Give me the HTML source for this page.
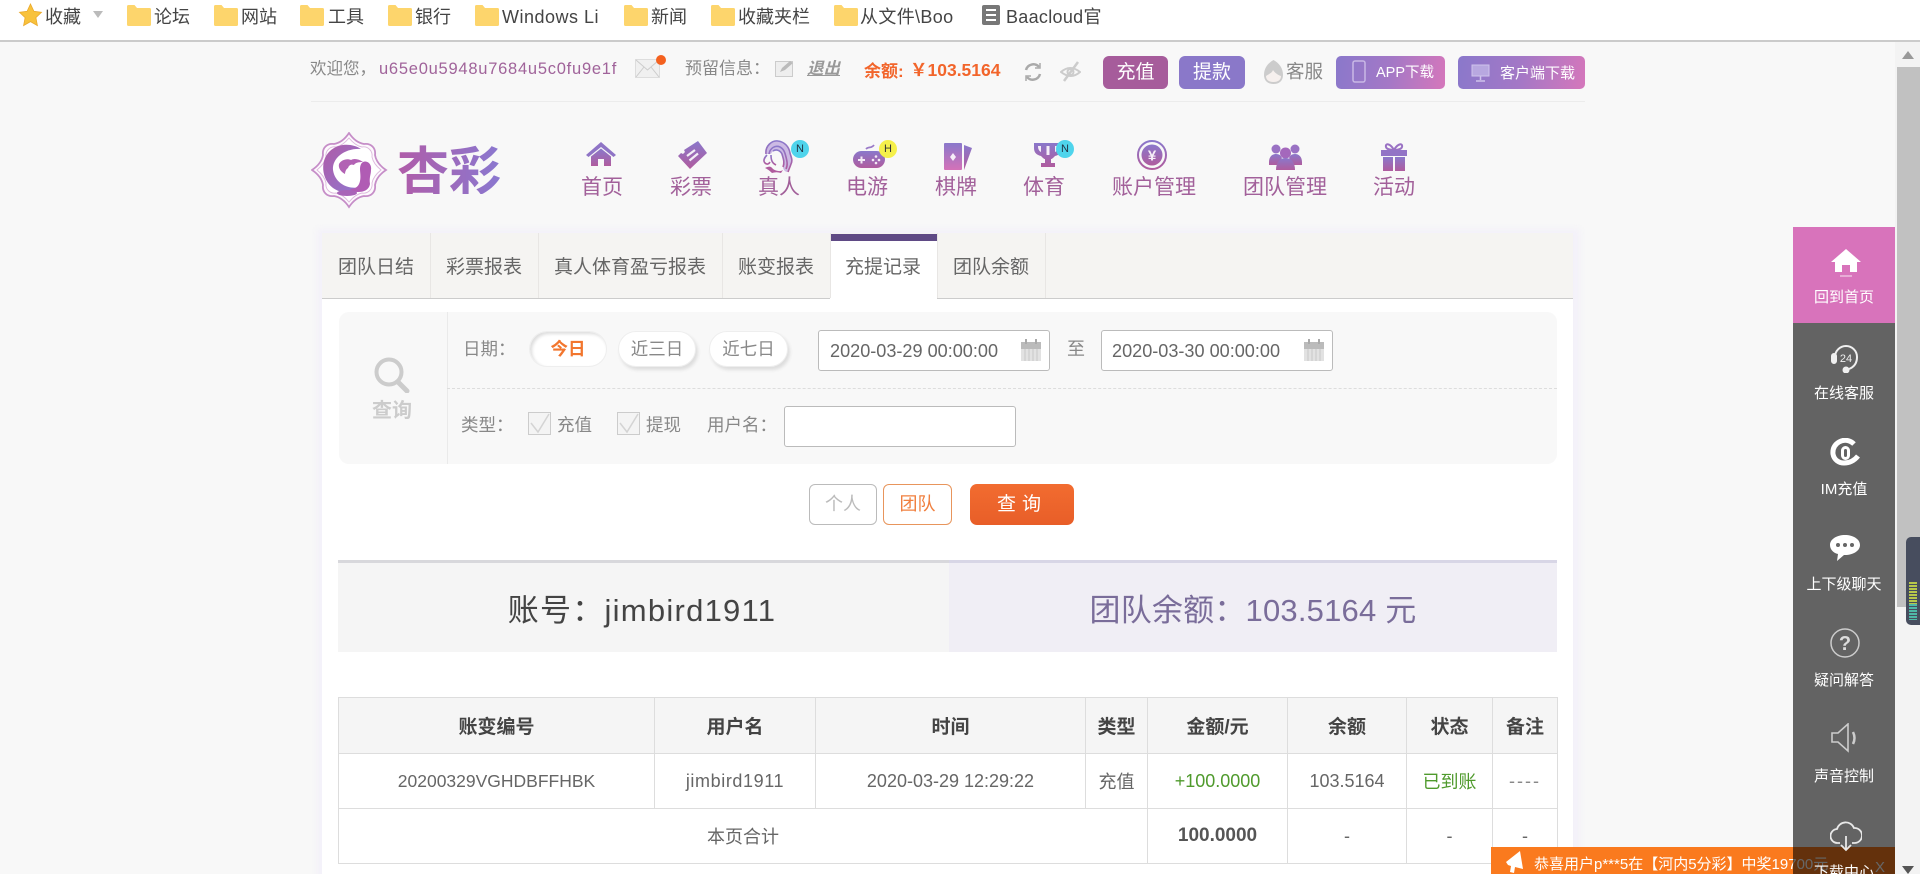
<!DOCTYPE html>
<html lang="zh-CN"><head><meta charset="utf-8"><title>充提记录</title>
<style>
*{box-sizing:border-box}
html,body{margin:0;padding:0;width:1920px;height:874px;overflow:hidden;background:#f8f8f8}
body{position:relative;font-family:"Liberation Sans","Noto Sans CJK SC",sans-serif;color:#666}
.a,.t,svg.i{position:absolute}
.t{white-space:nowrap;line-height:1}
.c{text-align:center;transform:translateX(-50%)}
.bm{font-size:18px;color:#444;top:8px}
.nav{font-size:21px;color:#a2609a;top:177px}
.tab{font-size:19px;color:#666;top:258px}
.sep{position:absolute;top:233px;width:1px;height:65px;background:#e8e6e4}
.lb{font-size:17.5px;color:#888}
.pill{position:absolute;top:331px;height:36px;border-radius:18px;background:#fff;box-shadow:2px 3px 3px #ddd;border:1px solid #eee;text-align:center;line-height:35px;font-size:17.5px;color:#888}
.inp{position:absolute;background:#fff;border:1px solid #bbb;border-radius:3px}
.side{position:absolute;left:1793px;width:102px;text-align:center;font-size:15px;color:#fff;line-height:1;white-space:nowrap}
table{position:absolute;left:338px;top:697px;width:1219px;border-collapse:collapse;table-layout:fixed;background:#fff}
td,th{border:1px solid #ddd;text-align:center;padding:0;font-size:18px;color:#666;font-weight:400;white-space:nowrap}
th{background:#f5f5f5;color:#444;font-weight:700;height:56px;font-size:19px}
tbody td{height:55px}
</style></head><body>
<svg width="0" height="0" style="position:absolute"><defs>
<linearGradient id="g" x1="0" y1="0" x2="0" y2="1"><stop offset="0" stop-color="#8a78cb"/><stop offset="1" stop-color="#b05c9e"/></linearGradient>
<linearGradient id="g2" x1="0" y1="0" x2="0" y2="1"><stop offset="0" stop-color="#8a78cb"/><stop offset="1" stop-color="#d472b8"/></linearGradient>
<linearGradient id="g3" x1="0" y1="0" x2="1" y2="1"><stop offset="0" stop-color="#b05ca8"/><stop offset="1" stop-color="#8f76cf"/></linearGradient>
</defs></svg>

<!-- bookmarks -->
<div class="a" style="left:0;top:0;width:1920px;height:40px;background:#fff"></div>
<div class="a" style="left:0;top:40px;width:1920px;height:2px;background:#cbcbcb"></div>
<svg class="i" style="left:18px;top:3px" width="25" height="24" viewBox="0 0 24 24"><path d="M12 1l3.400 7.300 7.600 1-5.600 5.300 1.500 8L12 18.600 5.100 22.600l1.500-8L1 9.300l7.600-1z" fill="#f8c23c" stroke="#eaa92c" stroke-width=".8"/></svg>
<span class="t bm" style="left:45px">收藏</span>
<svg class="i" style="left:93px;top:11px" width="10" height="7"><path d="M0 0h10L5 7z" fill="#bbb"/></svg>
<svg class="i" style="left:127px;top:5px" width="24" height="21" viewBox="0 0 24 21"><path d="M0 1.500q0-1.500 1.500-1.500h6l2.500 3h12.500q1.500 0 1.500 1.500v15q0 1.500-1.500 1.500h-21q-1.500 0-1.500-1.500z" fill="#fdd56c"/></svg><span class="t bm" style="left:154px">论坛</span>
<svg class="i" style="left:214px;top:5px" width="24" height="21" viewBox="0 0 24 21"><path d="M0 1.500q0-1.500 1.500-1.500h6l2.500 3h12.500q1.500 0 1.500 1.500v15q0 1.500-1.500 1.500h-21q-1.500 0-1.500-1.500z" fill="#fdd56c"/></svg><span class="t bm" style="left:241px">网站</span>
<svg class="i" style="left:300px;top:5px" width="24" height="21" viewBox="0 0 24 21"><path d="M0 1.500q0-1.500 1.500-1.500h6l2.500 3h12.500q1.500 0 1.500 1.500v15q0 1.500-1.500 1.500h-21q-1.500 0-1.500-1.500z" fill="#fdd56c"/></svg><span class="t bm" style="left:328px">工具</span>
<svg class="i" style="left:388px;top:5px" width="24" height="21" viewBox="0 0 24 21"><path d="M0 1.500q0-1.500 1.500-1.500h6l2.500 3h12.500q1.500 0 1.500 1.500v15q0 1.500-1.500 1.500h-21q-1.500 0-1.500-1.500z" fill="#fdd56c"/></svg><span class="t bm" style="left:415px">银行</span>
<svg class="i" style="left:475px;top:5px" width="24" height="21" viewBox="0 0 24 21"><path d="M0 1.500q0-1.500 1.500-1.500h6l2.500 3h12.500q1.500 0 1.500 1.500v15q0 1.500-1.500 1.500h-21q-1.500 0-1.500-1.500z" fill="#fdd56c"/></svg><span class="t bm" style="left:502px;letter-spacing:.5px">Windows Li</span>
<svg class="i" style="left:624px;top:5px" width="24" height="21" viewBox="0 0 24 21"><path d="M0 1.500q0-1.500 1.500-1.500h6l2.500 3h12.500q1.500 0 1.500 1.500v15q0 1.500-1.500 1.500h-21q-1.500 0-1.500-1.500z" fill="#fdd56c"/></svg><span class="t bm" style="left:651px">新闻</span>
<svg class="i" style="left:711px;top:5px" width="24" height="21" viewBox="0 0 24 21"><path d="M0 1.500q0-1.500 1.500-1.500h6l2.500 3h12.500q1.500 0 1.500 1.500v15q0 1.500-1.500 1.500h-21q-1.500 0-1.500-1.500z" fill="#fdd56c"/></svg><span class="t bm" style="left:738px">收藏夹栏</span>
<svg class="i" style="left:834px;top:5px" width="24" height="21" viewBox="0 0 24 21"><path d="M0 1.500q0-1.500 1.500-1.500h6l2.500 3h12.500q1.500 0 1.500 1.500v15q0 1.500-1.500 1.500h-21q-1.500 0-1.500-1.500z" fill="#fdd56c"/></svg><span class="t bm" style="left:860px;letter-spacing:.35px">从文件\Boo</span>
<svg class="i" style="left:982px;top:5px" width="18" height="20"><rect width="18" height="20" rx="2" fill="#777"/><path d="M4 5h10M4 10h10M4 15h10" stroke="#fff" stroke-width="2"/></svg><span class="t bm" style="left:1006px;letter-spacing:.3px">Baacloud官</span>

<!-- top info -->
<span class="t" style="left:310px;top:61px;font-size:16.500px;color:#888">欢迎您，<span style="color:#a0639a;letter-spacing:.75px;margin-left:3px">u65e0u5948u7684u5c0fu9e1f</span></span>
<svg class="i" style="left:635px;top:59px" width="25" height="19"><rect x=".5" y=".5" width="24" height="18" fill="#f0f0f0" stroke="#ddd"/><path d="M1 1l11.500 10L24 1M1 18l8-10M24 18l-8-10" fill="none" stroke="#ccc"/></svg>
<div class="a" style="left:656px;top:55px;width:10px;height:10px;border-radius:50%;background:#f4611f"></div>
<span class="t lb" style="left:685px;top:60px;font-size:17px">预留信息：</span>
<svg class="i" style="left:775px;top:60px" width="19" height="17"><rect x=".5" y="1.500" width="17" height="15" fill="#eee" stroke="#ccc"/><path d="M5 12l2-4 8-7 3 2-8 7z" fill="#bbb"/></svg>
<span class="t" style="left:807px;top:61px;font-size:16.500px;color:#999;font-weight:700;font-style:italic;text-decoration:underline">退出</span>
<span class="t" style="left:864px;top:63px;font-size:17px;color:#f2652b;font-weight:700">余额:</span>
<span class="t" style="left:910px;top:62px;font-size:17.500px;color:#f2652b;font-weight:700">￥103.5164</span>
<svg class="i" style="left:1023px;top:62px" width="20" height="20" viewBox="0 0 20 20" fill="none" stroke="#aaa" stroke-width="2.500"><path d="M3 8a7.500 7.500 0 0 1 13-3M17 12a7.500 7.500 0 0 1-13 3"/><path d="M17 1v5h-5M3 19v-5h5" stroke-width="1.500"/></svg>
<svg class="i" style="left:1060px;top:61px" width="21" height="21" viewBox="0 0 21 21" fill="none" stroke="#ccc" stroke-width="2"><path d="M1 11q9-8 19 0q-9 8-19 0z"/><circle cx="10.500" cy="11" r="3"/><path d="M4 20L18 1" stroke-width="2.500"/></svg>
<div class="a" style="left:1103px;top:56px;width:65px;height:33px;border-radius:6px;background:#a65c9b;color:#fff;font-size:19px;line-height:33px;text-align:center">充值</div>
<div class="a" style="left:1179px;top:56px;width:66px;height:33px;border-radius:6px;background:#8a78c9;color:#fff;font-size:19px;line-height:33px;text-align:center">提款</div>
<svg class="i" style="left:1263px;top:60px" width="21" height="24" viewBox="0 0 21 24"><path d="M10.500 0C5 3 1 8 1 15c0 6 4 9 9.500 9S20 21 20 15C20 8 16 3 10.500 0z" fill="#ccc"/><path d="M3 16c3-2 6-3 7-6 2 3 5 5 8 6 0 4-3 6-7.500 6S3 20 3 16z" fill="#f6f0ee"/></svg>
<span class="t" style="left:1286px;top:63px;font-size:18.500px;color:#888">客服</span>
<div class="a" style="left:1336px;top:56px;width:109px;height:33px;border-radius:5px;background:linear-gradient(100deg,#8a78cb 0%,#a478c6 50%,#d577bb 100%)"></div>
<svg class="i" style="left:1352px;top:60px" width="14" height="23"><rect x="1" y="1" width="12" height="21" rx="2" fill="none" stroke="#c9b8e6" stroke-width="1.500"/></svg>
<span class="t" style="left:1376px;top:66px;font-size:14.500px;color:#fff">APP下载</span>
<div class="a" style="left:1458px;top:56px;width:127px;height:33px;border-radius:5px;background:linear-gradient(100deg,#8a78cb 0%,#a478c6 50%,#d577bb 100%)"></div>
<svg class="i" style="left:1471px;top:64px" width="19" height="18"><rect x="1" y="1" width="17" height="11" fill="#b8a8e0" stroke="#cfc3ec"/><path d="M9.500 12v4M5 17h9" stroke="#cfc3ec" stroke-width="1.500"/></svg>
<span class="t" style="left:1500px;top:66px;font-size:15px;color:#fff">客户端下载</span>
<div class="a" style="left:311px;top:101px;width:1274px;height:1px;background:#ececec"></div>

<!-- logo -->
<svg class="i" style="left:311px;top:132px" width="78" height="78" viewBox="0 0 78 78">
<path d="M38 1C42 7 47 11 53 12C60 11 65 16 64 23C65 29 69 34 75 38C69 42 65 47 64 53C65 60 60 65 53 64C47 65 42 69 38 75C34 69 29 65 23 64C16 65 11 60 12 53C11 47 7 42 1 38C7 34 11 29 12 23C11 16 16 11 23 12C29 11 34 7 38 1z" fill="#fdf9fd" stroke="#c68ec8" stroke-width="1.800"/>
<path d="M38 6C42 11 46 14 51 15C57 14 62 19 61 25C62 30 65 34 70 38C65 42 62 46 61 51C62 57 57 62 51 61C46 62 42 65 38 70C34 65 30 62 25 61C19 62 14 57 15 51C14 46 11 42 6 38C11 34 14 30 15 25C14 19 19 14 25 15C30 14 34 11 38 6z" fill="#fff" stroke="#dcb8dc" stroke-width=".9"/>
<path d="M50 17C38 9 18 12 13 29 9 45 20 62 38 60 44 59 48 57 50 55 38 58 24 52 22 38 21 26 34 16 50 17z" fill="url(#g3)"/>
<path d="M28 32c2-4 8-6 12-4 3-2 8-1 12 2-5 0-8 1-9 3-3-1-5 0-6 3-2 1-3 4-3 6-4-2-7-6-6-10z" fill="#b262b4"/>
<path d="M52 30c5-2 9 3 8 8 0 5-2 7-1 14-1 6-6 8-12 8-3 0-6-1-8-3 6 0 9-3 10-8 1-4 0-9 0-12 0-3 1-6 3-7z" fill="#b05cb4"/>
<ellipse cx="36" cy="61" rx="10" ry="3" fill="#a964b8"/>
</svg>
<span class="t" style="left:397px;top:142px;font-size:52px;font-weight:700;font-family:'Noto Sans CJK SC',sans-serif;background:linear-gradient(90deg,#b05ca8,#8a78d0);-webkit-background-clip:text;background-clip:text;color:transparent">杏彩</span>

<!-- nav icons -->
<svg class="i" style="left:586px;top:142px" width="30" height="24" viewBox="0 0 30 24"><path d="M15 0L30 13l-2.500 2L15 5 2.500 15 0 13z" fill="#8f74c6"/><path d="M5 14.500L15 6.500l10 8V24h-7v-7h-6v7H5z" fill="url(#g)"/></svg>
<svg class="i" style="left:677px;top:141px" width="31" height="29" viewBox="0 0 31 29"><path d="M21 0l9 12L13 28 1 15l3-3 2 1 2-2-1-2z" fill="url(#g)"/><path d="M10 15l8-6M12.500 19.500l8.500-7" stroke="#f3eef6" stroke-width="2.200" fill="none"/></svg>
<svg class="i" style="left:762px;top:140px" width="32" height="34" viewBox="0 0 32 34">
<path d="M4 14C3 6 10 0 16 1c7 1 11 6 12 12 1 4 3 7 1 11-1 3-2 5-4 8-3-1-4-3-4-6 1-6-1-11-3-14-3-3-8-1-9 2z" fill="#a786d4" opacity=".55"/>
<g fill="none" stroke="url(#g)" stroke-width="1.600"><path d="M4 14C3 6 10 0 16 1c7 1 11 6 12 12 1 4 3 7 1 11-1 3-2 5-3 8"/><path d="M7 14C8 8 13 5 18 7c4 2 5 6 6 10 1 4 2 8 0 12"/><path d="M11 11C14 9 18 10 20 14c1 4 3 8 1 13"/><path d="M5 15c-3 3-4 6-2 8 2 2 4 1 5-1"/><path d="M9 15c0 5 1 8 5 10"/></g>
<path d="M3 28c4-2 6-2 8 1 3 2 7 3 10 1l-2 3c-3-1-6-1-9 0-3-3-5-4-7-5z" fill="#b05c9e"/></svg>
<div class="a" style="left:791px;top:140px;width:18px;height:18px;border-radius:50%;background:#4fd4ec;color:#234;font-size:11px;line-height:18px;text-align:center">N</div>
<svg class="i" style="left:852px;top:140px" width="33" height="30" viewBox="0 0 33 30"><path d="M14 9c3-3 5 0 8-4" fill="none" stroke="#9a7ac8" stroke-width="1.800"/><rect x="1" y="11" width="32" height="17" rx="8.500" fill="url(#g)"/><path d="M6 20h7M9.500 16.500v7" stroke="#f3eaf5" stroke-width="2"/><circle cx="24" cy="16.500" r="1.300" fill="#f3eaf5"/><circle cx="24" cy="23" r="1.300" fill="#f3eaf5"/><circle cx="21" cy="20" r="1.300" fill="#f3eaf5"/><circle cx="27" cy="20" r="1.300" fill="#f3eaf5"/></svg>
<div class="a" style="left:879px;top:140px;width:18px;height:18px;border-radius:50%;background:#f5f04a;color:#333;font-size:11px;line-height:18px;text-align:center">H</div>
<svg class="i" style="left:942px;top:142px" width="30" height="29" viewBox="0 0 30 29"><rect x="2" y="1" width="18" height="27" rx="1" fill="url(#g2)"/><path d="M22 3l8 3-8 22z" fill="url(#g)"/><path d="M11 11l3 4-3 4-3-4z" fill="#f6eef8"/></svg>
<svg class="i" style="left:1033px;top:142px" width="30" height="26" viewBox="0 0 30 26"><path d="M1 1h28v5c0 5-3 7-7 8-2 2-3 3-4 3v4h4v4H8v-4h4v-4c-1 0-2-1-4-3C4 13 1 11 1 6z" fill="url(#g)"/><path d="M5 4h3v6c-2-1-3-3-3-6zM25 4h-3v6c2-1 3-3 3-6zM13.500 4h3v9h-3z" fill="#f5eef8"/></svg>
<div class="a" style="left:1056px;top:140px;width:18px;height:18px;border-radius:50%;background:#4fd4ec;color:#234;font-size:11px;line-height:18px;text-align:center">N</div>
<svg class="i" style="left:1137px;top:140px" width="30" height="30" viewBox="0 0 30 30"><circle cx="15" cy="15" r="14" fill="none" stroke="url(#g)" stroke-width="2"/><circle cx="15" cy="15" r="10.500" fill="url(#g)"/><text x="15" y="20.500" font-size="15" font-weight="700" fill="#f6eef8" text-anchor="middle" font-family="Liberation Sans">¥</text></svg>
<svg class="i" style="left:1269px;top:144px" width="33" height="26" viewBox="0 0 33 26"><circle cx="7" cy="5" r="4.500" fill="#9a72c4"/><circle cx="26" cy="5" r="4.500" fill="#9a72c4"/><path d="M0 18c0-5 3-8 7-8s5 2 6 4l-5 7H0zM33 18c0-5-3-8-7-8s-5 2-6 4l5 7h8z" fill="url(#g)"/><circle cx="16.500" cy="9" r="5.500" fill="#a468bc"/><path d="M7 26c0-8 4-12 9.500-12S26 18 26 26z" fill="url(#g)"/></svg>
<svg class="i" style="left:1380px;top:143px" width="28" height="28" viewBox="0 0 28 28"><path d="M14 7C10 0 5 0 6 4c.5 2 4 3 8 3zM14 7c4-7 9-7 8-3-.5 2-4 3-8 3z" fill="none" stroke="#9a72c4" stroke-width="2"/><path d="M1 7h26v6H1z" fill="#9274c6"/><path d="M3 14h10v14H3zM15 14h10v14H15z" fill="url(#g)"/></svg>
<span class="t nav c" style="left:602px">首页</span><span class="t nav c" style="left:691px">彩票</span><span class="t nav c" style="left:779px">真人</span><span class="t nav c" style="left:867px">电游</span><span class="t nav c" style="left:956px">棋牌</span><span class="t nav c" style="left:1044px">体育</span><span class="t nav c" style="left:1154px">账户管理</span><span class="t nav c" style="left:1285px">团队管理</span><span class="t nav c" style="left:1394px">活动</span>

<!-- card -->
<div class="a" style="left:317px;top:229px;width:1263px;height:660px;background:#f3f1f9;filter:blur(3px)"></div>
<div class="a" style="left:322px;top:233px;width:1251px;height:660px;background:#fff"></div>
<div class="a" style="left:322px;top:233px;width:1251px;height:66px;background:#f5f4f2;border-bottom:1px solid #ccc"></div>
<div class="a" style="left:830px;top:234px;width:107px;height:65px;background:#fff"></div>
<div class="a" style="left:830px;top:234px;width:107px;height:7px;background:#5f4a85"></div>
<div class="sep" style="left:430px"></div><div class="sep" style="left:538px"></div><div class="sep" style="left:722px"></div><div class="sep" style="left:830px"></div><div class="sep" style="left:937px"></div><div class="sep" style="left:1045px"></div>
<span class="t tab c" style="left:376px">团队日结</span><span class="t tab c" style="left:484px">彩票报表</span><span class="t tab c" style="left:630px">真人体育盈亏报表</span><span class="t tab c" style="left:776px">账变报表</span><span class="t tab c" style="left:883px">充提记录</span><span class="t tab c" style="left:991px">团队余额</span>

<!-- filter -->
<div class="a" style="left:339px;top:312px;width:1218px;height:152px;background:#f8f8f8;border-radius:10px"></div>
<div class="a" style="left:447px;top:312px;width:1px;height:152px;background:#eaeaea"></div>
<div class="a" style="left:447px;top:388px;width:1110px;border-top:1px dashed #ddd"></div>
<svg class="i" style="left:374px;top:357px" width="36" height="36" viewBox="0 0 36 36" fill="none" stroke="#ccc"><circle cx="15" cy="15" r="12.500" stroke-width="4"/><path d="M24 25l9 9" stroke-width="5" stroke-linecap="round"/></svg>
<span class="t c" style="left:392px;top:401px;font-size:20px;font-weight:700;color:#ccc">查询</span>
<span class="t lb" style="left:463px;top:341px">日期：</span>
<div class="pill" style="left:529px;width:78px;box-shadow:inset 2px 2px 3px #ddd;color:#f2762e;font-weight:700">今日</div>
<div class="pill" style="left:618px;width:78px">近三日</div>
<div class="pill" style="left:709px;width:79px">近七日</div>
<div class="inp" style="left:818px;top:330px;width:232px;height:41px"></div>
<span class="t" style="left:830px;top:342px;font-size:18.100px;color:#666">2020-03-29 00:00:00</span>
<svg class="i" style="left:1021px;top:339px" width="20" height="22"><rect y="3" width="20" height="7" fill="#bbb"/><rect x="4" width="2" height="5" fill="#aaa"/><rect x="14" width="2" height="5" fill="#aaa"/><rect y="10" width="20" height="12" fill="#e2e2e2"/><path d="M4 10v12M8 10v12M12 10v12M16 10v12" stroke="#c8c8c8"/></svg>
<span class="t lb" style="left:1067px;top:340px;font-size:18px">至</span>
<div class="inp" style="left:1101px;top:330px;width:232px;height:41px"></div>
<span class="t" style="left:1112px;top:342px;font-size:18.100px;color:#666">2020-03-30 00:00:00</span>
<svg class="i" style="left:1304px;top:339px" width="20" height="22"><rect y="3" width="20" height="7" fill="#bbb"/><rect x="4" width="2" height="5" fill="#aaa"/><rect x="14" width="2" height="5" fill="#aaa"/><rect y="10" width="20" height="12" fill="#e2e2e2"/><path d="M4 10v12M8 10v12M12 10v12M16 10v12" stroke="#c8c8c8"/></svg>
<span class="t lb" style="left:461px;top:417px">类型：</span>
<svg class="i" style="left:528px;top:412px" width="23" height="23"><rect x=".5" y=".5" width="22" height="22" fill="#f4f4f4" stroke="#ccc"/><path d="M3 11l7 9L21 2" fill="none" stroke="#d4d4d4" stroke-width="1.500"/></svg>
<span class="t lb" style="left:557px;top:417px">充值</span>
<svg class="i" style="left:617px;top:412px" width="23" height="23"><rect x=".5" y=".5" width="22" height="22" fill="#f4f4f4" stroke="#ccc"/><path d="M3 11l7 9L21 2" fill="none" stroke="#d4d4d4" stroke-width="1.500"/></svg>
<span class="t lb" style="left:646px;top:417px">提现</span>
<span class="t lb" style="left:707px;top:417px">用户名：</span>
<div class="inp" style="left:784px;top:406px;width:232px;height:41px"></div>

<div class="a" style="left:809px;top:484px;width:68px;height:41px;border:1px solid #bbb;border-radius:6px;background:#fff;color:#bbb;font-size:18px;line-height:39px;text-align:center">个人</div>
<div class="a" style="left:883px;top:484px;width:69px;height:41px;border:1px solid #e8955c;border-radius:6px;background:#fff;color:#f08040;font-size:18px;line-height:39px;text-align:center">团队</div>
<div class="a" style="left:970px;top:484px;width:104px;height:41px;border-radius:7px;background:linear-gradient(#f26c30,#e85e28);color:#fff;font-size:19px;line-height:41px;text-align:center;letter-spacing:6px">查询</div>

<!-- summary -->
<div class="a" style="left:338px;top:560px;width:611px;height:92px;background:#f5f5f5;border-top:3px solid #d8d8dc"></div>
<div class="a" style="left:949px;top:560px;width:608px;height:92px;background:#f0eef5;border-top:3px solid #d8d6e6"></div>
<span class="t c" style="left:642px;top:595px;font-size:31px;color:#444;letter-spacing:1.250px">账号：jimbird1911</span>
<span class="t c" style="left:1253px;top:595px;font-size:31px;color:#7a6d9a;letter-spacing:.2px">团队余额：103.5164 元</span>

<!-- table -->
<table><colgroup><col style="width:316px"><col style="width:161px"><col style="width:270px"><col style="width:62px"><col style="width:140px"><col style="width:119px"><col style="width:86px"><col style="width:65px"></colgroup>
<thead><tr><th>账变编号</th><th>用户名</th><th>时间</th><th>类型</th><th>金额/元</th><th>余额</th><th>状态</th><th>备注</th></tr></thead>
<tbody>
<tr><td style="font-size:17.500px">20200329VGHDBFFHBK</td><td style="letter-spacing:.6px">jimbird1911</td><td>2020-03-29 12:29:22</td><td>充值</td><td style="color:#4f9a2c">+100.0000</td><td>103.5164</td><td style="color:#4f9a2c">已到账</td><td style="color:#888;letter-spacing:2px">----</td></tr>
<tr><td colspan="4">本页合计</td><td style="font-weight:700;color:#555;font-size:19px">100.0000</td><td>-</td><td>-</td><td>-</td></tr>
</tbody></table>

<!-- scrollbar -->
<div class="a" style="left:1895px;top:42px;width:25px;height:832px;background:#f3f3f3"></div>
<div class="a" style="left:1897px;top:67px;width:23px;height:540px;background:#c1c1c1"></div>
<svg class="i" style="left:1902px;top:51px" width="12" height="8"><path d="M6 0l6 8H0z" fill="#999"/></svg>
<svg class="i" style="left:1902px;top:866px" width="12" height="8"><path d="M6 8L0 0h12z" fill="#555"/></svg>
<div class="a" style="left:1906px;top:537px;width:16px;height:88px;border-radius:5px 0 0 5px;background:#474d5e"></div>
<div class="a" style="left:1909px;top:582px;width:8px;height:38px;background:repeating-linear-gradient(#b8c84a 0 2px,#474d5e 2px 3px)"></div>
<div class="a" style="left:1909px;top:604px;width:8px;height:16px;background:repeating-linear-gradient(#4fb8a8 0 2px,#474d5e 2px 3px)"></div>

<!-- ticker -->
<div class="a" style="left:1491px;top:847px;width:404px;height:27px;background:#fa7a1e;overflow:hidden"></div>
<svg class="i" style="left:1505px;top:849px" width="23" height="25" viewBox="0 0 23 25"><path d="M1 13l14-11 3 18-8-2-1 6-4-1 1-6-3-1z" fill="#fff"/></svg>
<span class="t" style="left:1534px;top:857px;font-size:15px;color:#fff">恭喜用户p***5在【河内5分彩】中奖19700元</span>
<span class="t" style="left:1875px;top:860px;font-size:15px;color:#fff">X</span>

<!-- sidebar -->
<div class="a" style="left:1793px;top:323px;width:102px;height:551px;background:rgba(0,0,0,.6)"></div>
<div class="a" style="left:1793px;top:227px;width:102px;height:96px;background:#d873bb"></div>
<svg class="i" style="left:1831px;top:249px" width="30" height="29" viewBox="0 0 30 29" fill="#fff"><path d="M15 0L30 13h-4v10h-7v-7h-8v7H4V13H0z"/><path d="M9 27h12" stroke="#fff" stroke-opacity=".8"/></svg>
<div class="side" style="top:290px">回到首页</div>
<svg class="i" style="left:1831px;top:343px" width="30" height="30" viewBox="0 0 30 30" fill="none" stroke="#f0f0f0" stroke-width="2"><path d="M4 14a11 11 0 0 1 22 0c0 6-3 10-8 12"/><rect x="1" y="11" width="4" height="9" rx="2" fill="#f0f0f0"/><circle cx="15" cy="27" r="2.500" fill="#f0f0f0"/><text x="15" y="19" font-size="11" fill="#f0f0f0" stroke="none" text-anchor="middle" font-family="Liberation Sans">24</text></svg>
<div class="side" style="top:386px">在线客服</div>
<svg class="i" style="left:1830px;top:438px" width="31" height="30" viewBox="0 0 31 30" fill="none" stroke="#fff" stroke-width="5"><path d="M24 6C20 2 14 1 9 4 4 7 2.500 11 3 16c1 6 6 9 11 9 5 0 10-2 14-7"/><rect x="12.500" y="9.500" width="6" height="11" rx="3" stroke-width="3"/></svg>
<div class="side" style="top:482px">IM充值</div>
<svg class="i" style="left:1830px;top:535px" width="30" height="27" viewBox="0 0 30 27"><path d="M15 0c8 0 15 4 15 10s-7 10-15 10l-1 0-7 6 1-7C3 18 0 14 0 10 0 4 7 0 15 0z" fill="#fff"/><circle cx="8" cy="10" r="2" fill="#666"/><circle cx="15" cy="10" r="2" fill="#666"/><circle cx="22" cy="10" r="2" fill="#666"/></svg>
<div class="side" style="top:577px">上下级聊天</div>
<svg class="i" style="left:1830px;top:628px" width="30" height="30" viewBox="0 0 30 30"><circle cx="15" cy="15" r="14" fill="none" stroke="#ccc" stroke-width="1.500"/><text x="15" y="22" font-size="20" font-weight="700" fill="#ddd" text-anchor="middle" font-family="Liberation Sans">?</text></svg>
<div class="side" style="top:673px">疑问解答</div>
<svg class="i" style="left:1831px;top:723px" width="28" height="30" viewBox="0 0 28 30" fill="none" stroke="#ccc" stroke-width="1.600"><path d="M1 10h6L17 1v27L7 19H1z"/><path d="M22 9q3 6 0 12" stroke-width="2.500"/></svg>
<div class="side" style="top:769px">声音控制</div>
<svg class="i" style="left:1830px;top:820px" width="32" height="32" viewBox="0 0 32 32" fill="none" stroke="#e8e8e8" stroke-width="1.800"><path d="M10 23H8a7 7 0 0 1-1-14 9 9 0 0 1 17-1 7.500 7.500 0 0 1 1 15h-3"/><path d="M16 16v14M11 25l5 5 5-5"/></svg>
<div class="side" style="top:865px">下载中心</div>
</body></html>
